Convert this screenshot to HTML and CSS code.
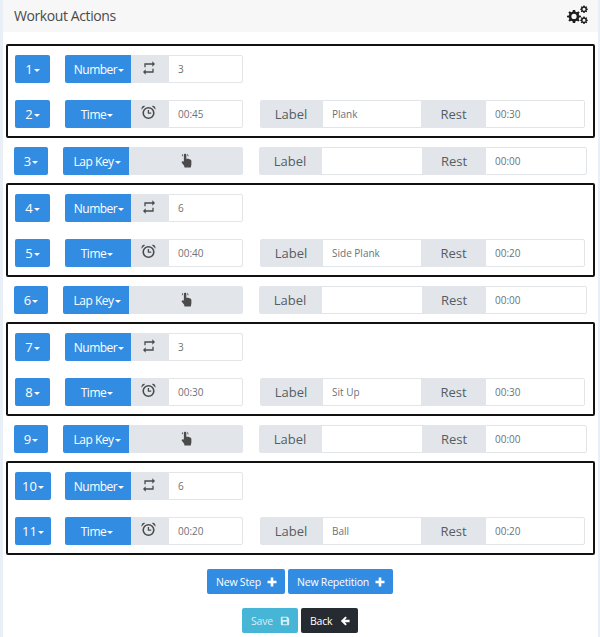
FILE: index.html
```html
<!DOCTYPE html>
<html lang="en">
<head>
  <meta charset="UTF-8">
  <title>Workout Actions</title>
  <link rel="stylesheet" href="styles.css">
</head>
<body>

  <svg class="defs" width="0" height="0">
    <symbol id="i-retweet" viewBox="0 0 24 24">
      <path d="M7 7h10v3l4-4-4-4v3H5v6h2V7zm10 10H7v-3l-4 4 4 4v-3h12v-6h-2v4z"/>
    </symbol>
    <symbol id="i-clock" viewBox="0 0 16 16">
      <path fill-rule="evenodd" d="M8 2A6.500 6.500 0 1 0 8 15 6.500 6.500 0 1 0 8 2ZM8 3.700A4.800 4.800 0 1 1 8 13.300 4.800 4.800 0 1 1 8 3.700ZM7.200 5.200V9.400H10.900V8H8.600V5.200ZM.4 5 4.400 1Q.6.100.4 5ZM15.600 5 11.600 1Q15.400.1 15.600 5Z"/>
    </symbol>
    <symbol id="i-hand" viewBox="0 0 16 16">
      <path d="M5.200 1.800C5.200.4 7.800.4 7.800 1.800V6.200C9.500 6 12.700 6.500 13.200 8.200V12.300L12.500 15.500H5.800L5.500 13.500 3 10.500C2.500 9.300 3.800 8.200 5.200 9.300ZM4 3.200 3 3.800C3 2.500 3.400 1.500 4.300.8ZM8.900.8C9.800 1.500 10.100 2.500 10.100 3.800L9 3.200Z"/>
    </symbol>
    <symbol id="i-cog" viewBox="0 0 16 16">
      <path fill-rule="evenodd" d="M6.700 1H9.300L9.700 3 11.300 3.700 13 2.600 14.400 4 13.300 5.700 14 7.300 16 7.700V9.300L14 9.700 13.300 11.300 14.400 13 13 14.400 11.300 13.300 9.700 14 9.300 16H6.700L6.300 14 4.700 13.300 3 14.400 1.600 13 2.700 11.300 2 9.700 0 9.300V7.700L2 7.300 2.700 5.700 1.600 4 3 2.600 4.700 3.700 6.300 3ZM8 5.500A3 3 0 1 0 8 11.500 3 3 0 1 0 8 5.500Z"/>
    </symbol>
    <symbol id="i-plus" viewBox="0 0 10 10">
      <path d="M3.700.5H6.300V3.700H9.500V6.300H6.300V9.500H3.700V6.300H.5V3.700H3.700Z"/>
    </symbol>
    <symbol id="i-save" viewBox="0 0 12 12">
      <path fill-rule="evenodd" d="M1.500 1H9L11 3V9.800Q11 11 9.800 11H2.200Q1 11 1 9.800V1.500ZM3 2.200V4.800H8V2.200ZM3.500 7V9.800H8.500V7Z"/>
    </symbol>
    <symbol id="i-back" viewBox="0 0 12 12">
      <path d="M6.500.5 8.200 2.200 5.800 4.400H11.500V7.600H5.800L8.200 9.800 6.500 11.500 1 6Z"/>
    </symbol>
  </svg>

  <div class="page">
    <header class="card-head">
      <h2>Workout Actions</h2>
      <svg class="cogs" viewBox="0 0 22 20">
        <use href="#i-cog" x="0" y="4" width="14" height="14"/>
        <use href="#i-cog" x="13" y="0" width="8" height="8"/>
        <use href="#i-cog" x="13" y="11" width="8" height="8"/>
      </svg>
    </header>

    <!-- Repetition 1 -->
    <section class="rep">
      <div class="row">
        <div class="step-col"><button class="btn">1<i class="caret"></i></button></div>
        <div class="group">
          <button class="btn type">Number<i class="caret"></i></button>
          <span class="addon icon"><svg class="repeat"><use href="#i-retweet"/></svg></span>
          <input class="field" value="3">
        </div>
      </div>
      <div class="row">
        <div class="step-col"><button class="btn">2<i class="caret"></i></button></div>
        <div class="group">
          <button class="btn type time">Time<i class="caret"></i></button>
          <span class="addon icon"><svg class="alarm"><use href="#i-clock"/></svg></span>
          <input class="field" value="00:45">
        </div>
        <div class="group extras">
          <span class="addon label">Label</span>
          <input class="field" value="Plank">
          <span class="addon rest">Rest</span>
          <input class="field" value="00:30">
        </div>
      </div>
    </section>

    <div class="row lap">
      <div class="step-col"><button class="btn">3<i class="caret"></i></button></div>
      <div class="group">
        <button class="btn type">Lap Key<i class="caret"></i></button>
        <span class="addon tap"><svg class="hand"><use href="#i-hand"/></svg></span>
      </div>
      <div class="group extras">
        <span class="addon label">Label</span>
        <input class="field" value="">
        <span class="addon rest">Rest</span>
        <input class="field" value="00:00">
      </div>
    </div>

    <!-- Repetition 2 -->
    <section class="rep">
      <div class="row">
        <div class="step-col"><button class="btn">4<i class="caret"></i></button></div>
        <div class="group">
          <button class="btn type">Number<i class="caret"></i></button>
          <span class="addon icon"><svg class="repeat"><use href="#i-retweet"/></svg></span>
          <input class="field" value="6">
        </div>
      </div>
      <div class="row">
        <div class="step-col"><button class="btn">5<i class="caret"></i></button></div>
        <div class="group">
          <button class="btn type time">Time<i class="caret"></i></button>
          <span class="addon icon"><svg class="alarm"><use href="#i-clock"/></svg></span>
          <input class="field" value="00:40">
        </div>
        <div class="group extras">
          <span class="addon label">Label</span>
          <input class="field" value="Side Plank">
          <span class="addon rest">Rest</span>
          <input class="field" value="00:20">
        </div>
      </div>
    </section>

    <div class="row lap">
      <div class="step-col"><button class="btn">6<i class="caret"></i></button></div>
      <div class="group">
        <button class="btn type">Lap Key<i class="caret"></i></button>
        <span class="addon tap"><svg class="hand"><use href="#i-hand"/></svg></span>
      </div>
      <div class="group extras">
        <span class="addon label">Label</span>
        <input class="field" value="">
        <span class="addon rest">Rest</span>
        <input class="field" value="00:00">
      </div>
    </div>

    <!-- Repetition 3 -->
    <section class="rep">
      <div class="row">
        <div class="step-col"><button class="btn">7<i class="caret"></i></button></div>
        <div class="group">
          <button class="btn type">Number<i class="caret"></i></button>
          <span class="addon icon"><svg class="repeat"><use href="#i-retweet"/></svg></span>
          <input class="field" value="3">
        </div>
      </div>
      <div class="row">
        <div class="step-col"><button class="btn">8<i class="caret"></i></button></div>
        <div class="group">
          <button class="btn type time">Time<i class="caret"></i></button>
          <span class="addon icon"><svg class="alarm"><use href="#i-clock"/></svg></span>
          <input class="field" value="00:30">
        </div>
        <div class="group extras">
          <span class="addon label">Label</span>
          <input class="field" value="Sit Up">
          <span class="addon rest">Rest</span>
          <input class="field" value="00:30">
        </div>
      </div>
    </section>

    <div class="row lap">
      <div class="step-col"><button class="btn">9<i class="caret"></i></button></div>
      <div class="group">
        <button class="btn type">Lap Key<i class="caret"></i></button>
        <span class="addon tap"><svg class="hand"><use href="#i-hand"/></svg></span>
      </div>
      <div class="group extras">
        <span class="addon label">Label</span>
        <input class="field" value="">
        <span class="addon rest">Rest</span>
        <input class="field" value="00:00">
      </div>
    </div>

    <!-- Repetition 4 -->
    <section class="rep">
      <div class="row">
        <div class="step-col"><button class="btn">10<i class="caret"></i></button></div>
        <div class="group">
          <button class="btn type">Number<i class="caret"></i></button>
          <span class="addon icon"><svg class="repeat"><use href="#i-retweet"/></svg></span>
          <input class="field" value="6">
        </div>
      </div>
      <div class="row">
        <div class="step-col"><button class="btn">11<i class="caret"></i></button></div>
        <div class="group">
          <button class="btn type time">Time<i class="caret"></i></button>
          <span class="addon icon"><svg class="alarm"><use href="#i-clock"/></svg></span>
          <input class="field" value="00:20">
        </div>
        <div class="group extras">
          <span class="addon label">Label</span>
          <input class="field" value="Ball">
          <span class="addon rest">Rest</span>
          <input class="field" value="00:20">
        </div>
      </div>
    </section>

    <div class="actions add">
      <button class="btn small new-step">New Step<svg><use href="#i-plus"/></svg></button>
      <button class="btn small new-rep">New Repetition<svg><use href="#i-plus"/></svg></button>
    </div>
    <div class="actions finish">
      <button class="btn small save">Save<svg><use href="#i-save"/></svg></button>
      <button class="btn small back">Back<svg><use href="#i-back"/></svg></button>
    </div>
  </div>

</body>
</html>
```

FILE: styles.css
```css
* {
  box-sizing: border-box;
}

body {
  margin: 0;
  background: #e9eff7;
  font-family: "Open Sans", sans-serif;
  color: #495057;
}

.defs {
  position: absolute;
}

.page {
  width: 595px;
  height: 637px;
  margin-left: 3px;
  background: #fff;
  overflow: hidden;
}

.card-head {
  display: flex;
  justify-content: space-between;
  align-items: center;
  height: 32px;
  padding: 0 0 2px 11px;
  background: #f7f7f7;
}

.card-head h2 {
  margin: 0;
  font-size: 14px;
  font-weight: 400;
  letter-spacing: -0.4px;
  color: #4a4a4a;
}

.cogs {
  width: 22px;
  height: 20px;
  margin-right: 9px;
  fill: #1c1c1c;
}

.rep {
  display: flex;
  flex-direction: column;
  gap: 17px;
  width: 589px;
  height: 94px;
  margin-left: 3px;
  padding: 9px 8px 0 7px;
  border: 2px solid #111;
  border-radius: 2px;
}

.card-head + .rep {
  margin-top: 12px;
}

.row {
  display: flex;
  height: 28px;
}

.step-col {
  flex: 0 0 50px;
}

.group {
  display: flex;
  flex: 0 0 178px;
  min-width: 0;
  height: 28px;
}

.extras {
  flex: 0 0 325px;
  margin-left: 17px;
}

.lap {
  margin: 9px 0 8px 11px;
}

.lap .step-col {
  flex-basis: 49px;
}

.lap .step-col .btn {
  min-width: 34px;
}

.lap .group {
  flex-basis: 180px;
}

.lap .extras {
  flex-basis: 328px;
  margin-left: 16px;
}

.lap .rest {
  flex-basis: 62px;
}

.btn {
  height: 28px;
  min-width: 35px;
  padding: 0 7px;
  border: none;
  border-radius: 2px;
  background: #328ce2;
  color: #fff;
  font-family: inherit;
  font-size: 13px;
}

.type {
  flex: 0 0 66px;
  padding: 0 0 0 2px;
  border-radius: 2px 0 0 2px;
  font-size: 12px;
  letter-spacing: -0.5px;
  white-space: nowrap;
}

.type.time {
  padding: 0 2px 0 0;
}

.caret {
  display: inline-block;
  margin-left: 1px;
  vertical-align: 2px;
  border-top: 3px solid #fff;
  border-left: 3px solid transparent;
  border-right: 3px solid transparent;
}

.addon {
  display: flex;
  align-items: center;
  justify-content: center;
  background: #e2e6ea;
  font-size: 13px;
  color: #555c63;
}

.addon svg {
  fill: #4b4b4b;
}

.repeat {
  width: 16px;
  height: 16px;
  margin: 0 2px 3px 0;
}

.alarm {
  width: 15px;
  height: 15px;
  margin: 0 2px 3px 0;
}

.hand {
  width: 15px;
  height: 15px;
  margin-bottom: 2px;
}

.icon {
  flex: 0 0 37px;
}

.tap {
  flex: 1;
  border-radius: 0 2px 2px 0;
}

.label {
  flex: 0 0 62px;
  border-radius: 2px 0 0 2px;
}

.rest {
  flex: 0 0 63px;
}

.field {
  flex: 1 1 0;
  width: 0;
  min-width: 0;
  height: 28px;
  padding: 0 9px;
  border: 1px solid #e2e5e8;
  border-radius: 0 2px 2px 0;
  background: #fff;
  font-family: inherit;
  font-size: 10px;
  color: #6b7278;
}

.extras .field:nth-child(2) {
  border-radius: 0;
}

.actions {
  display: flex;
  justify-content: center;
  gap: 3px;
  padding-right: 1px;
}

.add {
  margin-top: 14px;
}

.finish {
  margin-top: 14px;
}

.small {
  display: flex;
  align-items: center;
  justify-content: space-between;
  height: 25px;
  padding: 0 8px 0 9px;
  font-size: 10.5px;
  letter-spacing: -0.2px;
  white-space: nowrap;
}

.small svg {
  width: 10px;
  height: 10px;
  fill: #fff;
}

.new-step {
  width: 78px;
}

.new-rep {
  width: 105px;
}

.save {
  width: 56px;
  background: #46b5d6;
  color: #d5eef5;
}

.save svg {
  fill: #d5eef5;
}

.back {
  width: 57px;
  background: #262b31;
}
```
